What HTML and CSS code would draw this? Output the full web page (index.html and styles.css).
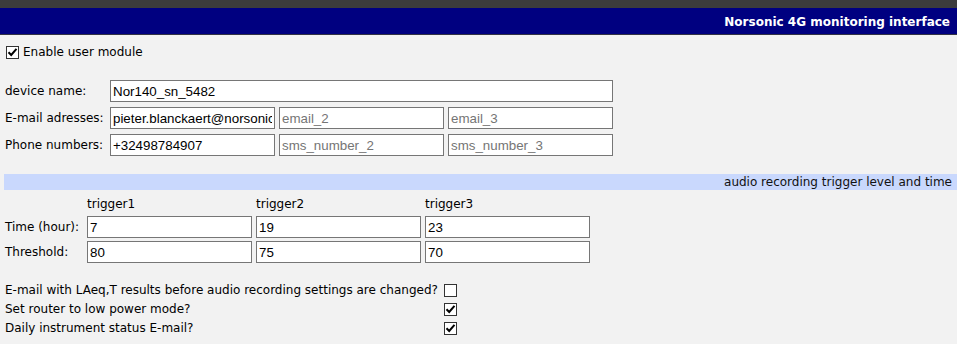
FILE: index.html
```html
<!DOCTYPE html>
<html>
<head>
<meta charset="utf-8">
<link rel="stylesheet" href="styles.css">
</head>
<body>
<div class="topbar"></div>
<header class="titlebar">Norsonic 4G monitoring interface</header>

<label class="enable"><input type="checkbox" class="cb" checked> Enable user module</label>

<div class="contacts">
  <span class="lbl">device name:</span>
  <input class="field wide" type="text" value="Nor140_sn_5482">
  <span class="lbl">E-mail adresses:</span>
  <input class="field" type="text" value="pieter.blanckaert@norsonic.com">
  <input class="field" type="text" placeholder="email_2">
  <input class="field" type="text" placeholder="email_3">
  <span class="lbl">Phone numbers:</span>
  <input class="field" type="text" value="+32498784907">
  <input class="field" type="text" placeholder="sms_number_2">
  <input class="field" type="text" placeholder="sms_number_3">
</div>

<div class="section">audio recording trigger level and time</div>

<div class="triggers">
  <span></span>
  <span class="head">trigger1</span>
  <span class="head">trigger2</span>
  <span class="head">trigger3</span>
  <span class="lbl">Time (hour):</span>
  <input class="field" type="text" value="7">
  <input class="field" type="text" value="19">
  <input class="field" type="text" value="23">
  <span class="lbl">Threshold:</span>
  <input class="field" type="text" value="80">
  <input class="field" type="text" value="75">
  <input class="field" type="text" value="70">
</div>

<div class="options">
  <span class="lbl">E-mail with LAeq,T results before audio recording settings are changed?</span>
  <input type="checkbox" class="cb">
  <span class="lbl">Set router to low power mode?</span>
  <input type="checkbox" class="cb" checked>
  <span class="lbl">Daily instrument status E-mail?</span>
  <input type="checkbox" class="cb" checked>
</div>
</body>
</html>
```

FILE: styles.css
```css
* { box-sizing: border-box; }
body {
  margin: 0;
  background: #f2f2f2;
  font-family: "DejaVu Sans", Verdana, sans-serif;
  font-size: 12px;
  color: #000;
}
.topbar {
  height: 8px;
  background: #3c3c3c;
}
.titlebar {
  height: 27px;
  background: #000080;
  border-bottom: 1px solid #333344;
  color: #fff;
  font-weight: bold;
  text-align: right;
  padding: 7px 7px 0 0;
  line-height: 14px;
}
.enable {
  display: flex;
  align-items: center;
  gap: 4px;
  margin: 10px 0 0 6px;
  height: 14px;
}
.cb {
  appearance: none;
  -webkit-appearance: none;
  width: 13px;
  height: 13px;
  margin: 0;
  border: 1px solid #333;
  background: #fff;
  flex: none;
}
.cb:checked {
  background: #fff url("data:image/svg+xml,%3Csvg xmlns='http://www.w3.org/2000/svg' width='11' height='11' viewBox='0 0 11 11'%3E%3Cpath d='M1.5 5.2 L4.2 8 L9.5 1.8' fill='none' stroke='%23000' stroke-width='2'/%3E%3C/svg%3E") center/11px 11px no-repeat;
}
.contacts {
  display: grid;
  grid-template-columns: 101px 165px 165px 165px;
  column-gap: 4px;
  row-gap: 5px;
  margin: 21px 0 0 5px;
  align-items: center;
}
.contacts .wide { grid-column: 2 / 5; }
.field {
  height: 22px;
  border: 1px solid #767676;
  background: #fff;
  padding: 1px 2px;
  font-family: "Liberation Sans", Arial, sans-serif;
  font-size: 13.33px;
  color: #000;
  min-width: 0;
  width: 100%;
  margin: 0;
  outline: none;
}
.field::placeholder { color: #757575; }
.section {
  margin: 18px 0 0 4px;
  height: 16px;
  background: #c9d8fd;
  text-align: right;
  padding-right: 5px;
  line-height: 16px;
  color: #111;
}
.triggers {
  display: grid;
  grid-template-columns: 78px 165px 165px 165px;
  column-gap: 4px;
  row-gap: 3px;
  margin: 6px 0 0 5px;
  align-items: center;
}
.triggers .head { height: 17px; line-height: 17px; }
.options {
  display: grid;
  grid-template-columns: max-content 13px;
  column-gap: 6px;
  row-gap: 5px;
  margin: 20px 0 0 5px;
  align-items: center;
}
```
